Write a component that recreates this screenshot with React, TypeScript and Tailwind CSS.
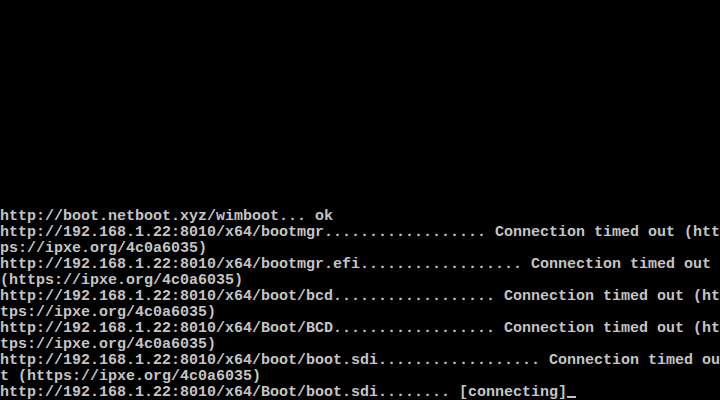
import React from "react";

const lines = [
  "http://boot.netboot.xyz/wimboot... ok",
  "http://192.168.1.22:8010/x64/bootmgr.................. Connection timed out (htt",
  "ps://ipxe.org/4c0a6035)",
  "http://192.168.1.22:8010/x64/bootmgr.efi.................. Connection timed out ",
  "(https://ipxe.org/4c0a6035)",
  "http://192.168.1.22:8010/x64/boot/bcd.................. Connection timed out (ht",
  "tps://ipxe.org/4c0a6035)",
  "http://192.168.1.22:8010/x64/Boot/BCD.................. Connection timed out (ht",
  "tps://ipxe.org/4c0a6035)",
  "http://192.168.1.22:8010/x64/boot/boot.sdi.................. Connection timed ou",
  "t (https://ipxe.org/4c0a6035)",
];

export default function App() {
  return (
    <div
      className="w-[720px] h-[400px] bg-black flex flex-col justify-end overflow-hidden text-[#c4c4c4] text-[15px] leading-[16px] font-bold"
      style={{ fontFamily: '"Liberation Mono", "DejaVu Sans Mono", monospace' }}
    >
      {lines.map((l, i) => (
        <div key={i} className="h-[16px] whitespace-pre">
          <span className="relative top-[1px]">{l}</span>
        </div>
      ))}
      <div className="h-[16px] whitespace-pre flex">
        <span className="relative top-[1px]">{"http://192.168.1.22:8010/x64/Boot/boot.sdi........ [connecting]"}</span>
        <span className="w-[9px] h-[16px] flex flex-col justify-end pb-[2px]">
          <span className="block h-[2px] w-[9px] bg-[#c4c4c4]" />
        </span>
      </div>
    </div>
  );
}
